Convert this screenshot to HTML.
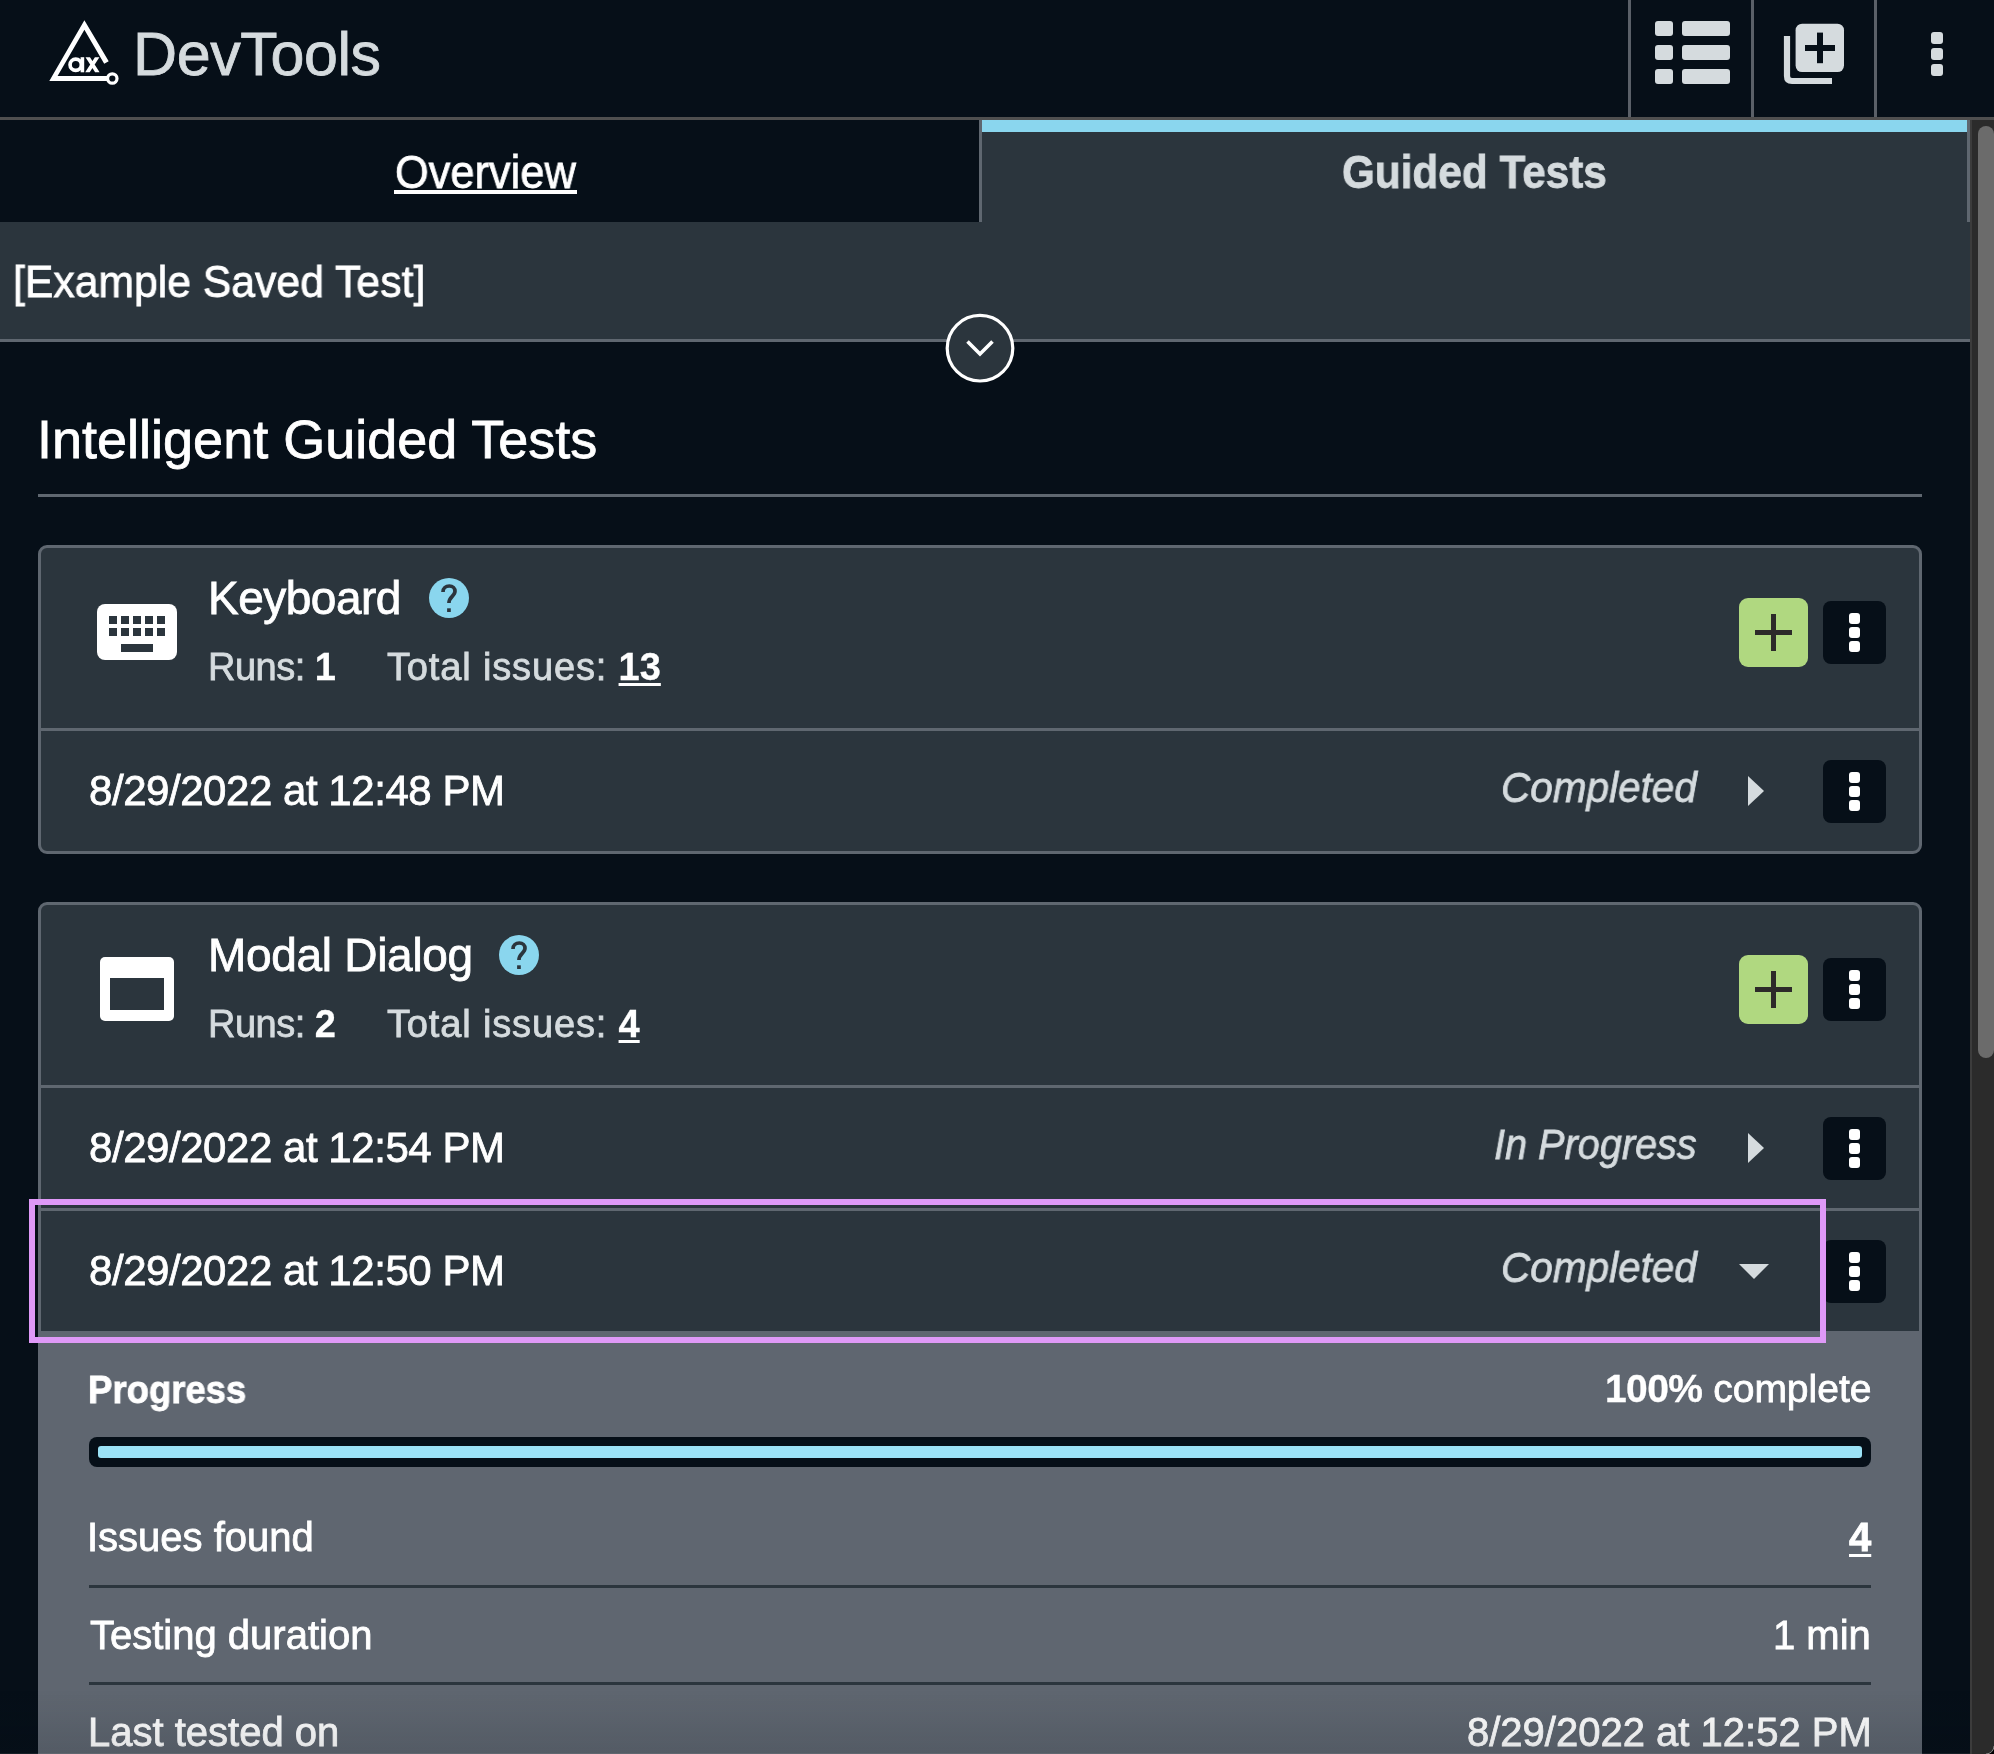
<!DOCTYPE html>
<html><head><meta charset="utf-8">
<style>
*{box-sizing:border-box;margin:0;padding:0}
html,body{width:1994px;height:1754px;overflow:hidden;background:#060f18;font-family:"Liberation Sans",sans-serif;color:#fff}
.a{position:absolute}
.t{position:absolute;white-space:nowrap;line-height:1;-webkit-text-stroke:0.8px currentColor;will-change:transform}
.t b{-webkit-text-stroke:0.3px currentColor}
.dark{background:#060f18}
.card{background:#2b353d}
.kb{position:absolute;width:63px;height:63px;background:#060f18;border-radius:8px}
.kb i{position:absolute;left:25.8px;width:11.2px;height:11px;background:#fff;border-radius:3px}
.add{position:absolute;width:69px;height:69px;background:#b0d880;border-radius:9px}
.add:before{content:"";position:absolute;left:16px;top:32px;width:37px;height:5px;background:#2d2a2a}
.add:after{content:"";position:absolute;left:32px;top:16px;width:5px;height:37px;background:#2d2a2a}
.arr{position:absolute;width:0;height:0;border-top:15.5px solid transparent;border-bottom:15.5px solid transparent;border-left:16px solid #d5dbde}
</style></head><body>

<!-- HEADER -->
<div class="a dark" style="left:0;top:0;width:1994px;height:117px"></div>
<div class="a" style="left:0;top:117px;width:1994px;height:3px;background:#4f4f4f"></div>
<svg class="a" style="left:40px;top:10px" width="90" height="90" viewBox="40 10 90 90">
  <path d="M84.4 20.3 L108.7 61.2 L104.2 63.8 L84.4 29.8 L57.6 75.9 L107 75.9 L107 81.05 L49.3 81.05 Z" fill="#fff"/>
  <circle cx="112.3" cy="78.5" r="4.7" fill="none" stroke="#fff" stroke-width="3.2"/>
  <circle cx="75.7" cy="64.75" r="5.65" fill="none" stroke="#fff" stroke-width="3.7"/>
  <rect x="80.6" y="57.2" width="3.6" height="15.1" fill="#fff"/>
  <path d="M85.5 57.2 H90 L99.6 72.3 H95.1 Z M94.9 57.2 H99.4 L89.7 72.3 H85.2 Z" fill="#fff"/>
</svg>
<div class="t" style="left:132.6px;top:23.7px;font-size:61px;color:#d5dbde;letter-spacing:-0.4px">DevTools</div>

<div class="a" style="left:1628px;top:0;width:3px;height:117px;background:#5a6068"></div>
<div class="a" style="left:1751px;top:0;width:3px;height:117px;background:#5a6068"></div>
<div class="a" style="left:1874px;top:0;width:3px;height:117px;background:#5a6068"></div>
<!-- list icon -->
<div class="a" style="left:1655px;top:21px;width:18px;height:15px;background:#d5dbde;border-radius:3px"></div>
<div class="a" style="left:1682px;top:21px;width:48px;height:15px;background:#d5dbde;border-radius:3px"></div>
<div class="a" style="left:1655px;top:45px;width:18px;height:15px;background:#d5dbde;border-radius:3px"></div>
<div class="a" style="left:1682px;top:45px;width:48px;height:15px;background:#d5dbde;border-radius:3px"></div>
<div class="a" style="left:1655px;top:69px;width:18px;height:15px;background:#d5dbde;border-radius:3px"></div>
<div class="a" style="left:1682px;top:69px;width:48px;height:15px;background:#d5dbde;border-radius:3px"></div>
<!-- add copy icon -->
<svg class="a" style="left:1780px;top:20px" width="70" height="70" viewBox="1780 20 70 70">
  <path d="M1787 36 V76 Q1787 81 1792 81 H1832" fill="none" stroke="#d5dbde" stroke-width="6.2"/>
  <rect x="1795.6" y="23.7" width="48.4" height="48.4" rx="6.5" fill="#d5dbde"/>
  <rect x="1805" y="45" width="30" height="6" fill="#060f18"/>
  <rect x="1817" y="32.6" width="6" height="30.6" fill="#060f18"/>
</svg>
<!-- kebab -->
<div class="a" style="left:1931px;top:32px;width:12px;height:12px;background:#d5dbde;border-radius:3px"></div>
<div class="a" style="left:1931px;top:48px;width:12px;height:12px;background:#d5dbde;border-radius:3px"></div>
<div class="a" style="left:1931px;top:64px;width:12px;height:12px;background:#d5dbde;border-radius:3px"></div>

<!-- TABS -->
<div class="a dark" style="left:0;top:120px;width:979px;height:102px"></div>
<div class="t" style="left:394.5px;top:147.6px;font-size:47px;color:#fff;transform:scaleX(0.923);transform-origin:0 0">Overview</div>
<div class="a" style="left:394px;top:190px;width:183px;height:4px;background:#fff"></div>
<div class="a card" style="left:979px;top:120px;width:991px;height:102px"></div>
<div class="a" style="left:979px;top:120px;width:3px;height:102px;background:#5f6770"></div>
<div class="a" style="left:1967px;top:120px;width:3px;height:102px;background:#5f6770"></div>
<div class="a" style="left:982px;top:120px;width:985px;height:12px;background:#8ad6ee"></div>
<div class="t" style="left:1342px;top:148px;font-size:47px;font-weight:bold;color:#d5dbde;transform:scaleX(0.9);transform-origin:0 0">Guided Tests</div>

<!-- SAVED TEST BAR -->
<div class="a card" style="left:0;top:222px;width:1970px;height:117px"></div>
<div class="a" style="left:0;top:339px;width:1970px;height:3px;background:#5f6770"></div>
<div class="t" style="left:13.2px;top:259.4px;font-size:45px;color:#fff;transform:scaleX(0.949);transform-origin:0 0">[Example Saved Test]</div>
<svg class="a" style="left:940px;top:308px" width="80" height="80" viewBox="940 308 80 80">
  <circle cx="980" cy="348.2" r="32.8" fill="#2b353d" stroke="#fff" stroke-width="3.2"/>
  <path d="M967.5 341.5 L980 354 L992.5 341.5" fill="none" stroke="#fff" stroke-width="3.6"/>
</svg>

<!-- HEADING -->
<div class="t" style="left:37px;top:412px;font-size:54px;color:#fff">Intelligent Guided Tests</div>
<div class="a" style="left:38px;top:494px;width:1884px;height:3px;background:#5f6770"></div>

<!-- CARD 1 -->
<div class="a card" style="left:38px;top:545px;width:1884px;height:309px;border:3px solid #5f6770;border-radius:9px"></div>
<div class="a" style="left:41px;top:728px;width:1878px;height:3px;background:#5f6770"></div>


<div class="a" style="left:97px;top:604px;width:80px;height:56px;background:#fff;border-radius:8px"></div>
<div class="a card" style="left:109.1px;top:616.2px;width:7.6px;height:7.6px"></div>
<div class="a card" style="left:121.1px;top:616.2px;width:7.6px;height:7.6px"></div>
<div class="a card" style="left:133.1px;top:616.2px;width:7.6px;height:7.6px"></div>
<div class="a card" style="left:145.1px;top:616.2px;width:7.6px;height:7.6px"></div>
<div class="a card" style="left:157.1px;top:616.2px;width:7.6px;height:7.6px"></div>
<div class="a card" style="left:109.1px;top:628.2px;width:7.6px;height:7.6px"></div>
<div class="a card" style="left:121.1px;top:628.2px;width:7.6px;height:7.6px"></div>
<div class="a card" style="left:133.1px;top:628.2px;width:7.6px;height:7.6px"></div>
<div class="a card" style="left:145.1px;top:628.2px;width:7.6px;height:7.6px"></div>
<div class="a card" style="left:157.1px;top:628.2px;width:7.6px;height:7.6px"></div>
<div class="a card" style="left:121.1px;top:644.3px;width:31.7px;height:7.4px"></div>

<div class="t" style="left:208.4px;top:575.3px;font-size:46px;letter-spacing:-0.5px;color:#fff">Keyboard</div>
<svg class="a" style="left:429px;top:578px" width="40" height="40" viewBox="0 0 40 40">
  <circle cx="20" cy="20" r="20" fill="#8ad6ee"/>
  <path d="M14 13.9 C14 10.2 16.8 8 20.3 8 C23.8 8 26 10.3 26 13.3 C26 15.6 24.6 17 23 18.6 C21 20.6 19.95 21.8 19.95 24.9" fill="none" stroke="#2b353d" stroke-width="3.7"/>
  <rect x="18.1" y="30.3" width="3.7" height="3.7" fill="#2b353d"/>
</svg>
<div class="t" style="left:208.4px;top:648.2px;font-size:38px;letter-spacing:-0.5px;color:#d5dbde">Runs: <b style="color:#fff">1</b></div>
<div class="t" style="left:387px;top:648.2px;font-size:38px;letter-spacing:0.85px;color:#d5dbde">Total issues: <b style="letter-spacing:0;color:#fff;text-decoration:underline;text-decoration-thickness:3px;text-underline-offset:3px">13</b></div>
<div class="add" style="left:1739px;top:598px"></div>
<div class="kb" style="left:1823px;top:601px"><i style="top:12px"></i><i style="top:26px"></i><i style="top:40px"></i></div>
<div class="t" style="left:88.6px;top:769.6px;font-size:42px;letter-spacing:-0.45px;color:#fff">8/29/2022 at 12:48 PM</div>
<div class="t" style="left:1501px;top:765.6px;font-size:43px;font-style:italic;color:#d5dbde;transform:scaleX(0.942);transform-origin:0 0">Completed</div>
<div class="arr" style="left:1748px;top:775.5px"></div>
<div class="kb" style="left:1823px;top:760px"><i style="top:12px"></i><i style="top:26px"></i><i style="top:40px"></i></div>

<!-- CARD 2 -->
<div class="a card" style="left:38px;top:902px;width:1884px;height:1000px;border:3px solid #5f6770;border-radius:9px"></div>
<div class="a" style="left:100px;top:956.5px;width:74.4px;height:64.5px;background:#fff;border-radius:5px"></div>
<div class="a card" style="left:110.2px;top:978.3px;width:53.7px;height:31.6px"></div>
<div class="t" style="left:208.4px;top:932.3px;font-size:46px;letter-spacing:-0.3px;color:#fff">Modal Dialog</div>
<svg class="a" style="left:499px;top:935px" width="40" height="40" viewBox="0 0 40 40">
  <circle cx="20" cy="20" r="20" fill="#8ad6ee"/>
  <path d="M14 13.9 C14 10.2 16.8 8 20.3 8 C23.8 8 26 10.3 26 13.3 C26 15.6 24.6 17 23 18.6 C21 20.6 19.95 21.8 19.95 24.9" fill="none" stroke="#2b353d" stroke-width="3.7"/>
  <rect x="18.1" y="30.3" width="3.7" height="3.7" fill="#2b353d"/>
</svg>
<div class="t" style="left:208.4px;top:1005.2px;font-size:38px;letter-spacing:-0.5px;color:#d5dbde">Runs: <b style="color:#fff">2</b></div>
<div class="t" style="left:387px;top:1005.2px;font-size:38px;letter-spacing:0.85px;color:#d5dbde">Total issues: <b style="letter-spacing:0;color:#fff;text-decoration:underline;text-decoration-thickness:3px;text-underline-offset:3px">4</b></div>
<div class="add" style="left:1739px;top:955px"></div>
<div class="kb" style="left:1823px;top:958px"><i style="top:12px"></i><i style="top:26px"></i><i style="top:40px"></i></div>
<div class="a" style="left:41px;top:1085px;width:1878px;height:3px;background:#5f6770"></div>
<div class="t" style="left:88.6px;top:1127px;font-size:42px;letter-spacing:-0.45px;color:#fff">8/29/2022 at 12:54 PM</div>
<div class="t" style="left:1493.6px;top:1122.6px;font-size:43px;font-style:italic;color:#d5dbde;transform:scaleX(0.922);transform-origin:0 0">In Progress</div>
<div class="arr" style="left:1748px;top:1132.5px"></div>
<div class="kb" style="left:1823px;top:1117px"><i style="top:12px"></i><i style="top:26px"></i><i style="top:40px"></i></div>
<div class="a" style="left:41px;top:1208px;width:1878px;height:3px;background:#5f6770"></div>
<div class="t" style="left:88.6px;top:1249.7px;font-size:42px;letter-spacing:-0.45px;color:#fff">8/29/2022 at 12:50 PM</div>
<div class="t" style="left:1501px;top:1245.7px;font-size:43px;font-style:italic;color:#d5dbde;transform:scaleX(0.942);transform-origin:0 0">Completed</div>
<div class="a" style="left:1738.6px;top:1264.4px;width:0;height:0;border-left:15px solid transparent;border-right:15px solid transparent;border-top:15.6px solid #d5dbde"></div>
<div class="kb" style="left:1823px;top:1240px"><i style="top:12px"></i><i style="top:26px"></i><i style="top:40px"></i></div>

<!-- PANEL -->
<div class="a" style="left:38px;top:1331px;width:1884px;height:430px;background:#5f6670"></div>
<div class="a" style="left:29px;top:1199px;width:1797px;height:144px;border:6px solid #df99f7"></div>
<div class="t" style="left:87.8px;top:1370.6px;font-size:38.5px;font-weight:bold;color:#fff;transform:scaleX(0.948);transform-origin:0 0">Progress</div>
<div class="t" style="left:1605px;top:1369px;font-size:39px;color:#fff"><b style="letter-spacing:-0.6px">100%</b> complete</div>
<div class="a" style="left:89px;top:1437px;width:1782px;height:30px;background:#060f18;border-radius:8px"></div>
<div class="a" style="left:98px;top:1446px;width:1764px;height:12px;background:#9be2f6;border-radius:3px"></div>
<div class="t" style="left:86.6px;top:1517.4px;font-size:40px;color:#fff">Issues found</div>
<div class="t" style="left:1848.5px;top:1517.4px;font-size:40px;font-weight:bold;color:#fff;text-decoration:underline;text-decoration-thickness:3px;text-underline-offset:2.5px">4</div>
<div class="a" style="left:89px;top:1585px;width:1782px;height:3px;background:#2b353d"></div>
<div class="t" style="left:89.6px;top:1614.7px;font-size:40px;color:#fff">Testing duration</div>
<div class="t" style="left:1773px;top:1614.7px;font-size:40px;color:#fff">1 min</div>
<div class="a" style="left:89px;top:1682px;width:1782px;height:3px;background:#2b353d"></div>
<div class="t" style="left:87.6px;top:1711.9px;font-size:40px;color:#fff">Last tested on</div>
<div class="t" style="left:1466.6px;top:1711.9px;font-size:40px;color:#fff">8/29/2022 at 12:52 PM</div>
<div class="a" style="left:0;top:1690px;width:1970px;height:64px;background:linear-gradient(rgba(6,15,24,0),rgba(6,15,24,0.12))"></div>

<div class="a" style="left:0;top:1753px;width:1994px;height:1px;background:rgba(255,255,255,0.07)"></div>
<!-- SCROLLBAR -->
<div class="a" style="left:1970px;top:120px;width:24px;height:1634px;background:#2b2b2b"></div>
<div class="a" style="left:1970px;top:120px;width:2px;height:1634px;background:#3c3c3c"></div>
<div class="a" style="left:1978px;top:126px;width:16px;height:932px;background:#6b6b6b;border-radius:8px"></div>
<svg class="a" style="left:1980px;top:1740px" width="14" height="14" viewBox="1980 1740 14 14"><path d="M1994 1746 A8 8 0 0 1 1986 1754 L1994 1754 Z" fill="#000"/><path d="M1994 1746 A8 8 0 0 1 1986 1754" fill="none" stroke="#8a8a8a" stroke-width="1"/></svg>
</body></html>
